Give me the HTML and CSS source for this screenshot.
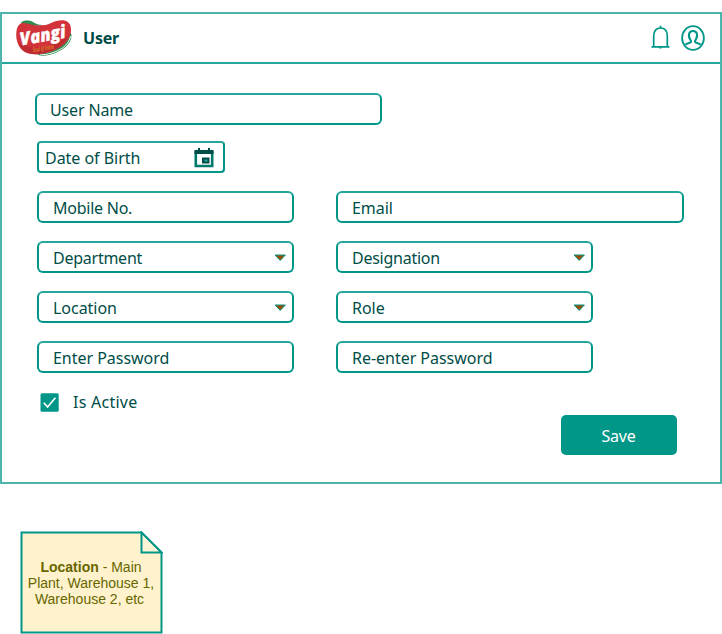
FILE: index.html
```
<!DOCTYPE html>
<html lang="en">
<head>
<meta charset="utf-8">
<title>User</title>
<link rel="stylesheet" href="styles.css">
</head>
<body>
<main class="window">
  <header class="bar">
    <svg class="logo" width="58" height="38" viewBox="0 0 58 38">
      <path d="M6 3.5C9 1 14 1 18 3C21 5 25 6.5 29 6C24 8 12 5 7 6Z" fill="#2f8a50"/>
      <path d="M56.5 16C56.5 27 43 36 26 37L22 35C39 34 52 26 55.5 13Z" fill="#2f8a50"/>
      <path d="M55.5 17C53.5 28 41 35 25 36" fill="none" stroke="#fff" stroke-width="1"/>
      <path d="M1.5 12C2.5 5 6.5 2.8 12 4.5C20 7 29 7.5 36 4C44 .5 53-.5 55.5 7C59 21 44 33 25 35C12 36.5 6 32 3 25C1.5 21 .8 17 1.5 12Z" fill="#d2323a"/>
      <path d="M3.5 24C13 31 38 31 54 16C49 28 37 33.5 24 35C12 36.5 6.5 31 3.5 24Z" fill="#bd2b30"/>
      <text class="logo-name" x="6" y="26.5" transform="rotate(-10 6 26.5)" textLength="46" lengthAdjust="spacingAndGlyphs">Vangi</text>
      <text class="logo-tag" x="18" y="33" transform="rotate(-9 18 33)" textLength="21" lengthAdjust="spacingAndGlyphs">Soul of India</text>
    </svg>
    <h1 class="title">User</h1>
    <svg class="bell" width="20" height="26" viewBox="0 0 20 26" fill="none" stroke="#009688" stroke-width="1.7">
      <path d="M1.5 21.8H19.5M3.7 21.5V11C3.7 6 6.2 3 10.5 3S17.3 6 17.3 11V21.5M10.5 .8V3"/>
      <path d="M8.5 22.3C9 24 12 24 12.5 22.3Z" fill="#009688" stroke="none"/>
    </svg>
    <svg class="avatar" width="24" height="26" viewBox="0 0 24 26" fill="none" stroke="#009688" stroke-width="1.8">
      <ellipse cx="12" cy="13" rx="10.9" ry="11.9"/>
      <path d="M4.6 19.8C5.6 18 8.8 18.6 9.8 17.2C10.3 16.3 9.8 15.2 9 14.2C7.2 11.2 7.2 6 12 6S16.8 11.2 15 14.2C14.2 15.2 13.7 16.3 14.2 17.2C15.2 18.6 18.4 18 19.4 19.8" stroke-width="2.1"/>
    </svg>
  </header>
  <form class="form">
    <div class="field name"><span>User Name</span></div>
    <div class="field dob"><span>Date of Birth</span>
      <svg width="20" height="20" viewBox="0 0 20 20">
        <path d="M1.8 3V18H18.2V3" fill="none" stroke="#00796d" stroke-width="2.6"/>
        <path d="M.5 2H19.5V6H.5ZM4 0H6V3H4ZM14 0H16V3H14Z" fill="#004d47"/>
        <path d="M8 9.5H15.5V15.5H8Z" fill="#004d47"/>
        <path d="M10.5 11.5H13.5V13.5H10.5Z" fill="#26a69a"/>
      </svg>
    </div>
    <div class="grid">
      <div class="field"><span class="tight">Mobile No.</span></div>
      <div class="field wide"><span>Email</span></div>
      <div class="field"><span class="tight">Department</span><svg class="arrow" width="12" height="8" viewBox="0 0 12 8"><path d="M1 1H11.4L6.2 6.4Z"/></svg></div>
      <div class="field"><span class="tight">Designation</span><svg class="arrow" width="12" height="8" viewBox="0 0 12 8"><path d="M1 1H11.4L6.2 6.4Z"/></svg></div>
      <div class="field"><span>Location</span><svg class="arrow" width="12" height="8" viewBox="0 0 12 8"><path d="M1 1H11.4L6.2 6.4Z"/></svg></div>
      <div class="field"><span>Role</span><svg class="arrow" width="12" height="8" viewBox="0 0 12 8"><path d="M1 1H11.4L6.2 6.4Z"/></svg></div>
      <div class="field"><span>Enter Password</span></div>
      <div class="field"><span>Re-enter Password</span></div>
    </div>
    <div class="active">
      <svg width="19" height="19" viewBox="0 0 19 19"><rect x=".5" y=".2" width="18.2" height="18.5" rx="1.5" fill="#009688"/><path d="M3.8 9.8L7.6 14L15.4 4.8" fill="none" stroke="#fff" stroke-width="1.7"/></svg>
      <span>Is Active</span>
    </div>
    <button class="save" type="button">Save</button>
  </form>
</main>
<aside class="note">
  <svg class="sheet" width="143" height="103" viewBox="0 0 143 103" fill="#fff2cc" stroke="#009688" stroke-width="2">
    <path d="M1.5 1.5H121.5L141.5 21.5V101.5H1.5Z"/>
    <path d="M121.5 1.5V21.5H141.5Z" fill="#fff4d6"/>
  </svg>
  <p class="note-text"><b>Location</b> - Main<br>Plant, Warehouse 1,<br><span class="last">Warehouse 2, etc</span></p>
</aside>
</body>
</html>
```
FILE: styles.css
```
* { box-sizing: border-box; }
body {
  margin: 0;
  padding-top: 12px;
  background: #fff;
  color: #004d47;
  font: 16px/20px "Noto Sans", sans-serif;
  overflow: hidden;
}
.window {
  height: 472px;
  border: 2px solid #4db6ac;
}
.bar {
  display: flex;
  align-items: center;
  height: 50px;
  padding: 0 15px 0 13px;
  border-bottom: 2px solid #26a69a;
}
.logo { margin-right: 10px; }
.logo-name {
  font: italic 800 18px "Open Sans", sans-serif;
  fill: #fff;
  stroke: #fff;
  stroke-width: .3;
}
.logo-tag {
  font: italic 6px "Noto Sans", sans-serif;
  fill: #f5a623;
}
.title {
  flex: 1;
  margin: 0;
  font-size: 16px;
  line-height: 20px;
  letter-spacing: -.2px;
}
.bell { margin-right: 11px; }
.form { padding: 29px 0 0 35px; }
.field {
  display: flex;
  align-items: center;
  justify-content: space-between;
  width: 257px;
  height: 32px;
  padding: 1px 6px 0 14px;
  border: 2px solid #009688;
  border-top-color: #26a69a;
  border-radius: 6px;
  white-space: nowrap;
  letter-spacing: -.03px;
}
.tight { letter-spacing: -.25px; }
.name {
  width: 347px;
  margin-left: -2px;
  padding-left: 13px;
  letter-spacing: -.15px;
}
.dob {
  width: 188px;
  margin-top: 16px;
  padding: 1px 9px 0 6px;
  border-radius: 4px;
}
.grid {
  display: grid;
  grid-template-columns: 257px 257px;
  gap: 18px 42px;
  margin-top: 18px;
}
.wide { width: 348px; }
.arrow {
  fill: #994c00;
  stroke: #009688;
  stroke-width: 1;
}
.active {
  display: flex;
  align-items: center;
  gap: 14px;
  height: 18px;
  margin: 20px 0 0 3px;
  letter-spacing: .25px;
}
.save {
  display: block;
  width: 116px;
  height: 40px;
  margin: 4px 0 0 524px;
  padding: 2px 1px 0 0;
  border: 0;
  border-radius: 5px;
  background: #009688;
  color: #fff;
  font: 16px/20px "Noto Sans", sans-serif;
  letter-spacing: -.2px;
}
.note {
  display: grid;
  width: 143px;
  margin: 47px 0 0 20px;
}
.sheet, .note-text { grid-area: 1 / 1; }
.note-text {
  align-self: center;
  margin: 0;
  padding-right: 1px;
  color: #666600;
  font: 14px/16px "Liberation Sans", sans-serif;
  text-align: center;
  white-space: nowrap;
}
.last { padding-right: 3px; }
```
